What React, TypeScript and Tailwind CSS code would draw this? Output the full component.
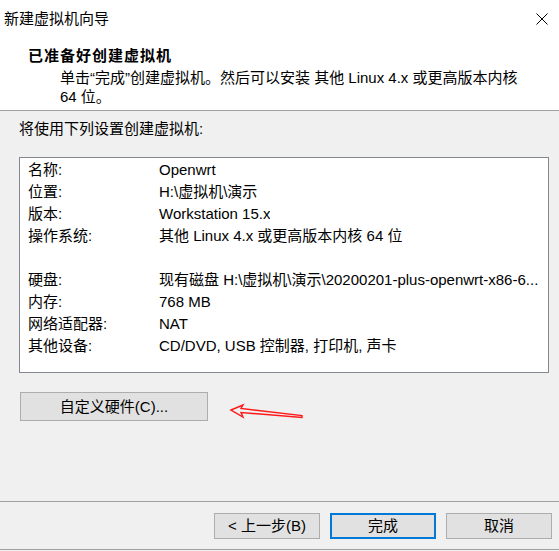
import React from "react";

const rows: [string, string][] = [
  ["名称:", "Openwrt"],
  ["位置:", "H:\\虚拟机\\演示"],
  ["版本:", "Workstation 15.x"],
  ["操作系统:", "其他 Linux 4.x 或更高版本内核 64 位"],
  ["", ""],
  ["硬盘:", "现有磁盘 H:\\虚拟机\\演示\\20200201-plus-openwrt-x86-6..."],
  ["内存:", "768 MB"],
  ["网络适配器:", "NAT"],
  ["其他设备:", "CD/DVD, USB 控制器, 打印机, 声卡"],
];

export default function App() {
  return (
    <div
      className="w-[559px] h-[551px] bg-[#f0f0f0] flex flex-col text-black text-[15px] overflow-hidden"
      style={{ fontFamily: '"Liberation Sans", "Noto Sans CJK SC", sans-serif' }}
    >
      {/* top white area */}
      <div className="h-[111px] bg-white border-b border-[#a0a0a0] flex flex-col">
        <div className="h-[37px] flex items-center justify-between pl-[4px] pr-[11px]">
          <span className="leading-[20px]">新建虚拟机向导</span>
          <svg width="12" height="12" viewBox="0 0 12 12">
            <path d="M0.5 0.5 L11.5 11.5 M11.5 0.5 L0.5 11.5" stroke="#000" strokeWidth="1" fill="none" />
          </svg>
        </div>
        <div className="pl-[28px] mt-[9px] leading-[20px] font-bold tracking-[1px]">已准备好创建虚拟机</div>
        <div className="pl-[60px] mt-[2px] leading-[19px]">
          <div className="whitespace-nowrap">单击“完成”创建虚拟机。然后可以安装 其他 Linux 4.x 或更高版本内核</div>
          <div>64 位。</div>
        </div>
      </div>

      {/* body */}
      <div className="flex-1 flex flex-col">
        <div className="pl-[19px] pt-[8px] leading-[20px]">将使用下列设置创建虚拟机:</div>
        <div className="ml-[19px] mt-[18px] w-[530px] h-[216px] bg-white border border-[#828790] pt-[1px] pl-[8px] pr-[8px]">
          {rows.map(([k, v], i) => (
            <div key={i} className="flex h-[22px] items-center leading-[22px] whitespace-nowrap">
              <span className="w-[131px] shrink-0">{k}</span>
              <span className="overflow-hidden">{v}</span>
            </div>
          ))}
        </div>
        <div className="relative mt-[19px] ml-[20px] flex items-center">
          <button className="w-[188px] h-[29px] bg-[#e1e1e1] border border-[#adadad] flex items-center justify-center leading-[20px]">
            自定义硬件(C)...
          </button>
          <svg className="absolute left-[207px] top-[9px]" width="80" height="20" viewBox="0 0 80 20">
            <polygon
              points="4,9 16,4 14,7.5 75,14.5 75,16.5 14,11.5 16,16"
              fill="none"
              stroke="#ff1a1a"
              strokeWidth="1.4"
              strokeLinejoin="miter"
            />
          </svg>
        </div>
      </div>

      {/* footer */}
      <div className="h-[49px] border-t border-b border-[#a0a0a0] flex justify-end gap-[10px] pr-[7px] pt-[11px]">
        <button className="w-[106px] h-[26px] bg-[#e1e1e1] border border-[#adadad] flex items-center justify-center leading-[20px]">
          &lt; 上一步(B)
        </button>
        <button className="w-[106px] h-[26px] bg-[#e1e1e1] border-2 border-[#0078d7] flex items-center justify-center leading-[20px]">
          完成
        </button>
        <button className="w-[106px] h-[26px] bg-[#e1e1e1] border border-[#adadad] flex items-center justify-center leading-[20px]">
          取消
        </button>
      </div>
      <div className="h-[1px]" />
    </div>
  );
}
